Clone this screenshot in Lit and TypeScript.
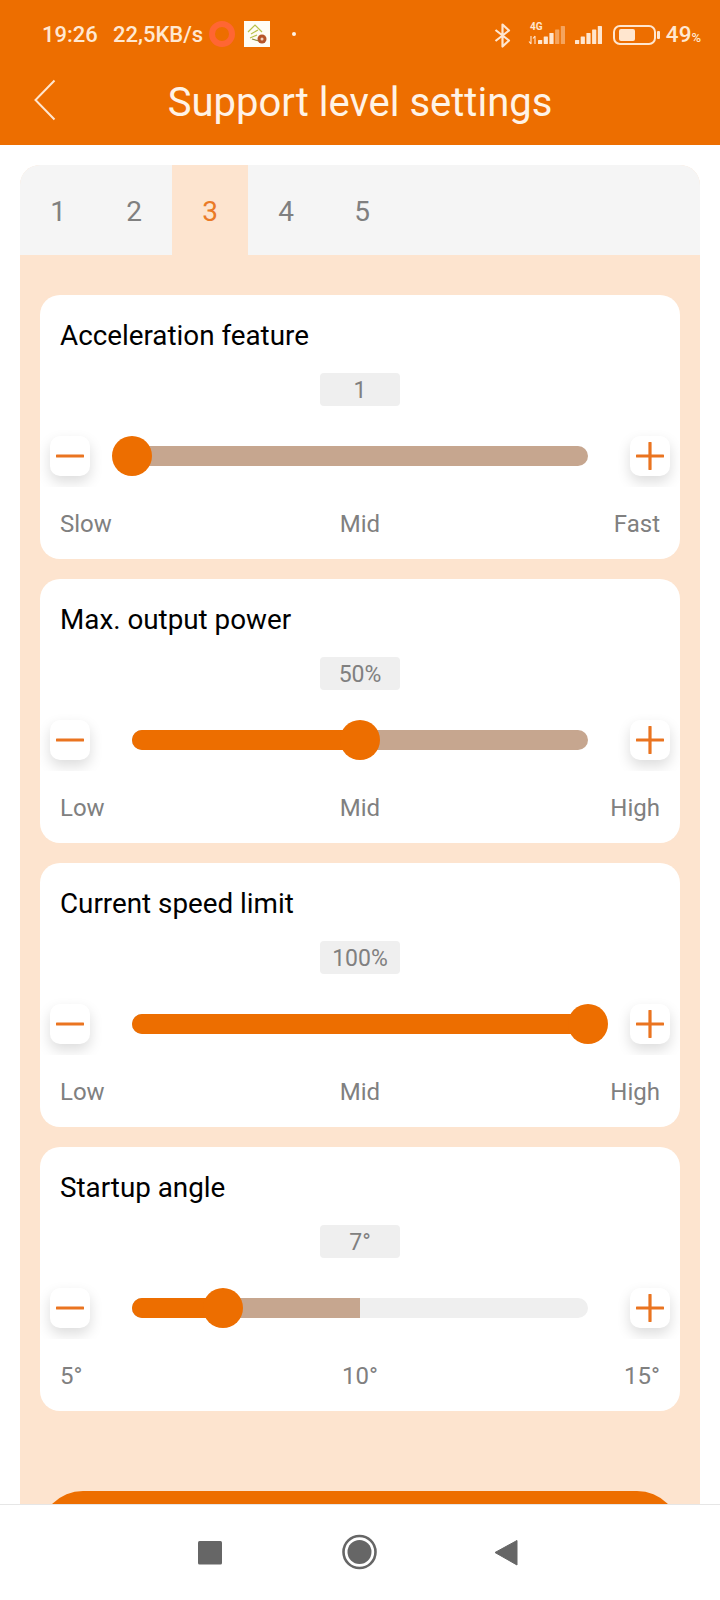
import { LitElement, html, css, svg } from "lit";
import { customElement } from "lit/decorators.js";

interface Setting {
  title: string;
  value: string;
  pos: number;
  buffer: number;
  labels: [string, string, string];
}

const SETTINGS: Setting[] = [
  { title: "Acceleration feature", value: "1", pos: 0, buffer: 100, labels: ["Slow", "Mid", "Fast"] },
  { title: "Max. output power", value: "50%", pos: 50, buffer: 100, labels: ["Low", "Mid", "High"] },
  { title: "Current speed limit", value: "100%", pos: 100, buffer: 100, labels: ["Low", "Mid", "High"] },
  { title: "Startup angle", value: "7°", pos: 20, buffer: 50, labels: ["5°", "10°", "15°"] },
];

const bars = (x: number, base: number, dim: boolean) => {
  const heights = [4, 7.5, 11, 14.5, 18];
  return heights.map((h, i) => {
    const op = dim && i >= 3 ? 0.45 : 1;
    return svg`<rect x=${x + i * 5.7} y=${base - h} width="4.2" height=${h} rx="0.6" fill="#ffe6cf" opacity=${op}></rect>`;
  });
};

@customElement("app-root")
export class AppRoot extends LitElement {
  static styles = css`
    :host {
      display: flex;
      flex-direction: column;
      width: 720px;
      height: 1600px;
      overflow: hidden;
      background: #fff;
      font-family: Roboto, "Liberation Sans", sans-serif;
    }
    .header {
      flex: none;
      height: 145px;
      background: #ed6e00;
      color: #fff3e6;
    }
    .status {
      height: 68px;
      display: flex;
      align-items: center;
      padding: 0 19px 0 42px;
      color: #ffe8d2;
      font-size: 22px;
      font-weight: 500;
    }
    .time { width: 71px; }
    .speed { width: 96px; }
    .rec {
      width: 26px;
      height: 26px;
      box-sizing: border-box;
      border: 6px solid #ff6633;
      border-radius: 50%;
    }
    .notif { margin-left: 9px; display: block; }
    .dot {
      width: 4px;
      height: 4px;
      border-radius: 50%;
      background: #fff3e6;
      margin-left: 22px;
    }
    .spacer { flex: 1; }
    .sysicons { display: block; }
    .pct { margin-left: 4px; font-size: 22.5px; }
    .pct small { font-size: 13px; }
    .titlebar {
      height: 77px;
      position: relative;
      display: flex;
      align-items: center;
      justify-content: center;
      padding-bottom: 9px;
      box-sizing: border-box;
    }
    .back { position: absolute; left: 33px; top: 11px; }
    .titlebar h1 {
      margin: 0;
      font-size: 40px;
      font-weight: 400;
    }
    .main {
      flex: 1;
      min-height: 0;
      overflow: hidden;
      padding: 20px 20px 0;
    }
    .panel {
      background: #fde4cf;
      border-radius: 20px 20px 0 0;
      overflow: hidden;
    }
    .tabs {
      display: flex;
      height: 90px;
      background: #f5f5f5;
    }
    .tab {
      width: 76px;
      box-sizing: border-box;
      padding-top: 3px;
      display: flex;
      align-items: center;
      justify-content: center;
      font-size: 28px;
      color: #808080;
    }
    .tab.active {
      background: #fde4cf;
      color: #ea7a26;
    }
    .cards {
      display: flex;
      flex-direction: column;
      gap: 20px;
      padding: 40px 20px 0;
    }
    .card {
      background: #fff;
      border-radius: 20px;
      overflow: hidden;
      height: 264px;
    }
    .title {
      padding: 21px 20px 0;
      line-height: 40px;
      font-size: 27.8px;
      color: #000;
    }
    .pill {
      width: 80px;
      height: 33px;
      box-sizing: border-box;
      padding-top: 2px;
      margin: 17px auto 0;
      background: #efefef;
      border-radius: 4px;
      display: flex;
      align-items: center;
      justify-content: center;
      color: #808080;
      font-size: 23px;
    }
    .row {
      display: flex;
      align-items: center;
      margin-top: 19px;
      padding: 11px 10px;
      overflow: hidden;
    }
    .step {
      flex: none;
      width: 40px;
      height: 40px;
      background: #fff;
      border-radius: 10px;
      box-shadow: 0 6px 14px rgba(0, 0, 0, 0.14);
      display: flex;
      align-items: center;
      justify-content: center;
    }
    .track {
      flex: 1;
      position: relative;
      height: 20px;
      margin: 0 42px;
    }
    .rail {
      height: 20px;
      border-radius: 10px;
      overflow: hidden;
      background: #efefef;
      position: relative;
    }
    .buffer {
      height: 100%;
      background: #c6a68f;
    }
    .fill {
      position: absolute;
      left: 0;
      top: 0;
      height: 100%;
      background: #ed6e00;
    }
    .thumb {
      position: absolute;
      top: -10px;
      width: 40px;
      height: 40px;
      margin-left: -20px;
      border-radius: 50%;
      background: #ed6e00;
    }
    .labels {
      display: grid;
      grid-template-columns: 1fr auto 1fr;
      padding: 17px 20px 0;
      line-height: 40px;
      font-size: 24px;
      color: #808080;
    }
    .labels span:last-child { text-align: right; }
    .cta {
      height: 86px;
      margin: 80px 20px 0;
      background: #ed6e00;
      border-radius: 43px;
    }
    .nav {
      flex: none;
      height: 96px;
      box-sizing: border-box;
      border-top: 1px solid #e6e6e6;
      background: #fff;
    }
    .nav svg { display: block; }
  `;

  private stepIcon(plus: boolean) {
    return html`<svg width="28" height="28" viewBox="0 0 28 28">
      <path
        d=${plus ? "M1 14H27M14 1V27" : "M1 14H27"}
        stroke="#ea7420"
        stroke-width="3.2"
        stroke-linecap="round"
        fill="none"
      ></path>
    </svg>`;
  }

  private card(s: Setting) {
    return html`<section class="card">
      <div class="title">${s.title}</div>
      <div class="pill">${s.value}</div>
      <div class="row">
        <div class="step">${this.stepIcon(false)}</div>
        <div class="track">
          <div class="rail">
            <div class="buffer" style="width:${s.buffer}%"></div>
            <div class="fill" style="width:${s.pos}%"></div>
          </div>
          <div class="thumb" style="left:${s.pos}%"></div>
        </div>
        <div class="step">${this.stepIcon(true)}</div>
      </div>
      <div class="labels">
        ${s.labels.map((l) => html`<span>${l}</span>`)}
      </div>
    </section>`;
  }

  render() {
    return html`
      <header class="header">
        <div class="status">
          <span class="time">19:26</span>
          <span class="speed">22,5KB/s</span>
          <span class="rec"></span>
          <svg class="notif" width="26" height="26" viewBox="0 0 26 26">
            <rect width="26" height="26" fill="#fffdf5"></rect>
            <path d="M4 11L11 4L18 11M7 13L14 9M6 17L13 14" stroke="#b9c24a" stroke-width="1.2" fill="none"></path>
            <path d="M8 18L15 20" stroke="#8a8a3a" stroke-width="1.2"></path>
            <circle cx="18" cy="18" r="4.5" fill="#b5552a"></circle>
            <circle cx="18" cy="18" r="1.5" fill="#f2d2bd"></circle>
          </svg>
          <span class="dot"></span>
          <span class="spacer"></span>
          <svg class="sysicons" width="172" height="32" viewBox="0 0 172 32">
            <path
              d="M5.5 12L19 22.5L12.5 28.5V6.5L19 12.5L5.5 23"
              stroke="#ffe6cf"
              stroke-width="2.2"
              fill="none"
              stroke-linejoin="round"
            ></path>
            <text x="40" y="12" font-family="Roboto" font-size="10" font-weight="700" fill="#ffe6cf">4G</text>
            <path d="M41 18V26M41 26L39 23.5M45 26V18M45 18L43 20.5" stroke="#ffe6cf" stroke-width="1.1" fill="none"></path>
            ${bars(48, 26, true)}
            ${bars(85, 26, false)}
            <rect x="124" y="8" width="41" height="18" rx="6" fill="none" stroke="#ffe6cf" stroke-width="2"></rect>
            <rect x="129" y="11" width="16" height="12" rx="2" fill="#ffe6cf"></rect>
            <rect x="167" y="13" width="3" height="8" rx="1" fill="#ffe6cf"></rect>
          </svg>
          <span class="pct">49<small>%</small></span>
        </div>
        <div class="titlebar">
          <svg class="back" width="24" height="42" viewBox="0 0 24 42">
            <path d="M21.5 1.5L2.5 21L21.5 40.5" stroke="#ffe6cf" stroke-width="2" fill="none"></path>
          </svg>
          <h1>Support level settings</h1>
        </div>
      </header>
      <main class="main">
        <div class="panel">
          <div class="tabs">
            ${[1, 2, 3, 4, 5].map(
              (n) => html`<div class=${n === 3 ? "tab active" : "tab"}>${n}</div>`
            )}
          </div>
          <div class="cards">${SETTINGS.map((s) => this.card(s))}</div>
          <div class="cta"></div>
        </div>
      </main>
      <footer class="nav">
        <svg width="720" height="95" viewBox="0 0 720 95">
          <rect x="198" y="36" width="24" height="23.5" rx="1.5" fill="#666"></rect>
          <circle cx="359.5" cy="47" r="16" fill="none" stroke="#666" stroke-width="2.6"></circle>
          <circle cx="359.5" cy="47" r="12" fill="#666"></circle>
          <path d="M517 35.5V60L495 47.5Z" fill="#666" stroke="#666" stroke-width="1" stroke-linejoin="round"></path>
        </svg>
      </footer>
    `;
  }
}
